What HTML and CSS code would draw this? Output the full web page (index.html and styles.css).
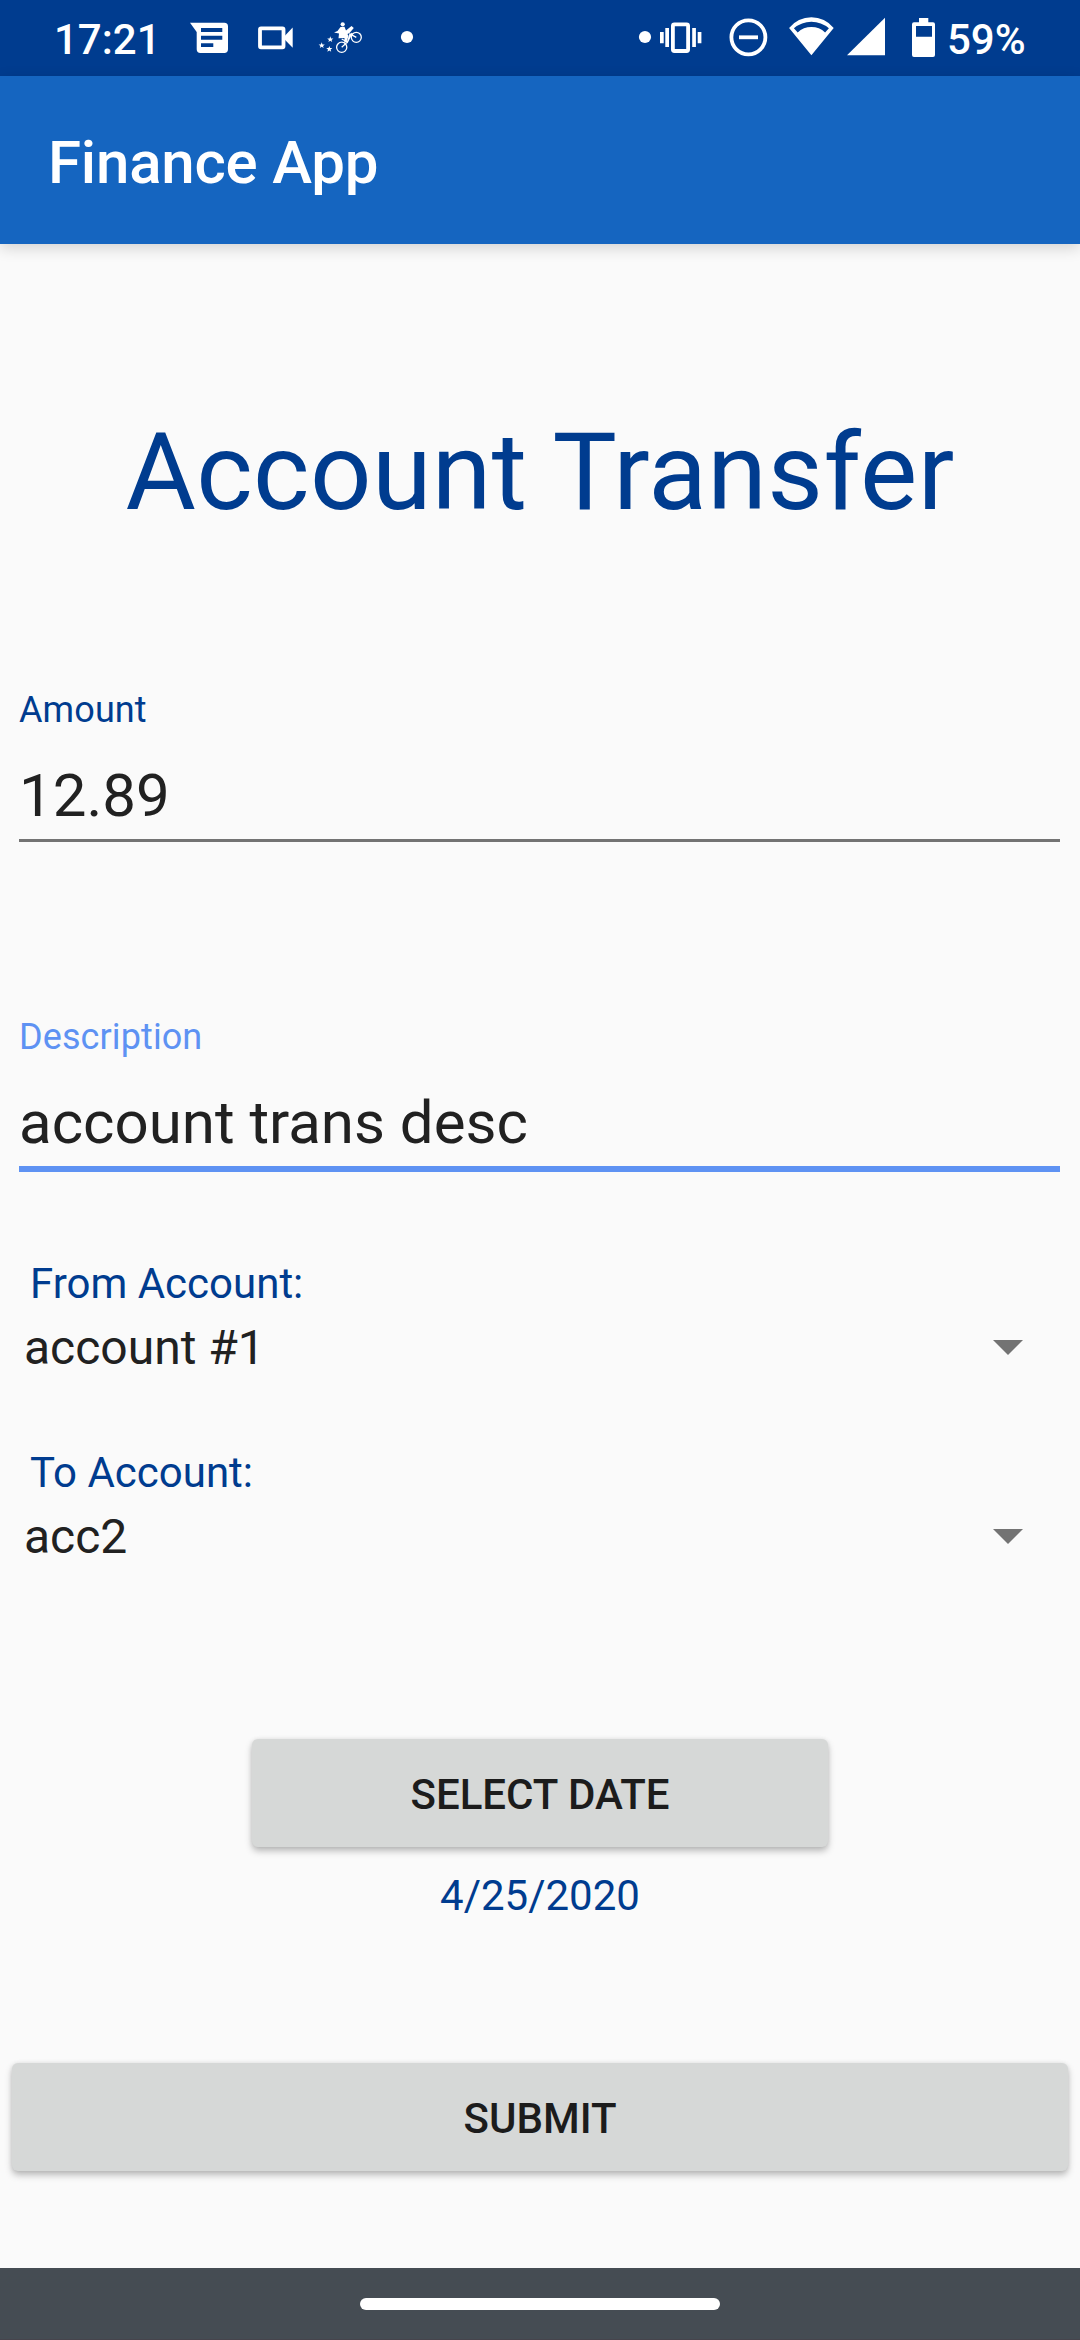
FILE: index.html
```html
<!DOCTYPE html>
<html lang="en">
<head>
  <meta charset="utf-8">
  <title>Finance App</title>
  <link rel="stylesheet" href="styles.css">
</head>
<body>
  <div class="screen">
    <header class="status-bar">
      <span class="clock">17:21</span>
      <svg class="icon" width="52" height="76" viewBox="188 0 52 76">
        <path fill="#fff" fill-rule="evenodd" d="M190 22.7H224.300Q228 22.700 228 26.400V49.300Q228 53 224.300 53H200.400Q196.700 53 196.700 49.300V32ZM201 28V32H222.300V28ZM201 35.700V39.700H222.300V35.700ZM201 43.200V47H213.300V43.200Z"/>
      </svg>
      <svg class="icon" width="70" height="76" viewBox="240 0 70 76">
        <rect x="260" y="28.300" width="23.500" height="19" rx="1" fill="none" stroke="#fff" stroke-width="3.800"/>
        <path fill="#fff" d="M283 37.700L292.700 27.500V47.700Z"/>
      </svg>
      <svg class="icon" width="70" height="76" viewBox="310 0 70 76">
        <g fill="none" stroke="#fff" stroke-width="1.300">
          <circle cx="341.700" cy="47.300" r="5.100"/>
          <circle cx="356.300" cy="37.300" r="5"/>
          <path d="M341.700 47.300L347.500 42L350 34L356.300 37.300M347.500 42L341.700 39M347 43L352 33"/>
        </g>
        <g fill="#fff">
          <circle cx="342.700" cy="24.300" r="2.100"/>
          <path d="M340.500 27L344.500 26.800L346 30.500L351.500 26L353.800 28L349.500 33L347.500 34L348.500 36L346.500 42L344.200 43L344.500 38L338.500 38.200L339 33.500L334 32.500L337.500 31Z"/>
          <path id="star" d="M330.300 36.300L331.100 38.400L333.400 38.500L331.600 39.900L332.200 42.100L330.300 40.800L328.400 42.100L329 39.900L327.200 38.500L329.500 38.400Z"/>
          <use href="#star" x="-8.600" y="6"/>
          <use href="#star" x="-1" y="9.600"/>
        </g>
      </svg>
      <svg class="icon" width="54" height="76" viewBox="380 0 54 76"><circle cx="407" cy="37" r="6.100" fill="#fff"/></svg>
      <div class="status-right">
        <svg class="icon" width="24" height="76" viewBox="633 0 24 76"><circle cx="645" cy="37" r="6.100" fill="#fff"/></svg>
        <svg class="icon" width="60" height="76" viewBox="657 0 60 76" fill="#fff">
          <path d="M660 32H663.700V43.300H660ZM665.300 28H669V47H665.300ZM692.200 28H695.900V47H692.200ZM697.700 32H701.400V43.300H697.700Z"/>
          <rect x="672.900" y="24.300" width="15.200" height="26.700" rx="1.500" fill="none" stroke="#fff" stroke-width="3.800"/>
        </svg>
        <svg class="icon" width="63" height="76" viewBox="717 0 63 76" fill="none" stroke="#fff" stroke-width="3.800">
          <circle cx="748.400" cy="37.300" r="17"/>
          <path d="M739 37.300H758"/>
        </svg>
        <svg class="icon" width="60" height="76" viewBox="780 0 60 76">
          <path fill="#fff" fill-rule="evenodd" d="M789.100 28A28.500 28.500 0 0 1 833.700 28L811.400 55.200ZM793.900 28.300L797.700 32.500A19.500 19.500 0 0 1 825.100 32.500L828.900 28.300A27 27 0 0 0 793.900 28.300Z"/>
        </svg>
        <svg class="icon" width="60" height="76" viewBox="840 0 60 76"><path fill="#fff" d="M847 55.300H885V17.800Z"/></svg>
        <svg class="icon" width="47" height="76" viewBox="900 0 47 76">
          <path fill="#fff" fill-rule="evenodd" d="M919 18H928.300V22.300H933Q935 22.300 935 24.300V55Q935 57 933 57H914Q912 57 912 55V24.300Q912 22.300 914 22.300H919ZM916 26V36.700H932V26Z"/>
        </svg>
        <span class="battery-level">59%</span>
      </div>
    </header>

    <div class="app-bar">Finance App</div>

    <main class="form">
      <h1 class="title">Account Transfer</h1>

      <div class="field">
        <div class="field-label">Amount</div>
        <div class="field-value">12.89</div>
      </div>

      <div class="field field-focused">
        <div class="field-label">Description</div>
        <div class="field-value">account trans desc</div>
      </div>

      <div class="picker">
        <div class="picker-label">From Account:</div>
        <div class="picker-row">
          <span>account #1</span>
          <svg class="arrow" width="30" height="15" viewBox="0 0 30 15"><path fill="#737373" d="M0 0H30L15 15Z"/></svg>
        </div>
      </div>

      <div class="picker">
        <div class="picker-label">To Account:</div>
        <div class="picker-row">
          <span>acc2</span>
          <svg class="arrow" width="30" height="15" viewBox="0 0 30 15"><path fill="#737373" d="M0 0H30L15 15Z"/></svg>
        </div>
      </div>

      <button class="button button-date">SELECT DATE</button>
      <div class="date">4/25/2020</div>
      <button class="button button-submit">SUBMIT</button>
    </main>

    <footer class="nav-bar"><div class="nav-handle"></div></footer>
  </div>
</body>
</html>
```

FILE: styles.css
```css
* {
  box-sizing: border-box;
}

body {
  margin: 0;
  background: #fafafa;
  color: #212121;
  font-family: Roboto, sans-serif;
}

.screen {
  display: flex;
  flex-direction: column;
  width: 1080px;
  height: 2340px;
  overflow: hidden;
}

.status-bar {
  display: flex;
  flex: none;
  height: 76px;
  background: #003c8f;
  color: #fff;
  font-size: 42px;
  font-weight: 500;
  line-height: 79px;
}

.icon {
  flex: none;
  display: block;
}

.clock {
  width: 188px;
  padding-left: 54px;
}

.status-right {
  display: flex;
  margin-left: auto;
}

.battery-level {
  width: 133px;
}

.app-bar {
  flex: none;
  height: 168px;
  padding-left: 48px;
  background: #1565c0;
  box-shadow: 0 4px 14px rgba(0, 0, 0, 0.16);
  color: #fff;
  font-size: 60px;
  font-weight: 500;
  letter-spacing: -0.2px;
  line-height: 174px;
}

.form {
  display: flex;
  flex: 1;
  flex-direction: column;
  padding-top: 165px;
}

.title {
  margin: 0 0 154px;
  color: #003c8f;
  font-size: 108px;
  font-weight: 400;
  letter-spacing: 0.35px;
  line-height: 126px;
  text-align: center;
}

.field {
  height: 153px;
  margin: 0 20px 174px 19px;
  border-bottom: 3px solid #737373;
}

.field-label {
  margin-bottom: 30px;
  color: #003c8f;
  font-size: 36px;
  letter-spacing: 0.1px;
  line-height: 42px;
}

.field-value {
  font-size: 60px;
  line-height: 70px;
}

.field-focused {
  height: 156px;
  margin-bottom: 87px;
  border-bottom: 6px solid #5e92f3;
}

.field-focused .field-label {
  color: #5e92f3;
}

.picker {
  height: 117px;
  margin-bottom: 72px;
}

.picker-label {
  margin-bottom: 11px;
  padding-left: 30px;
  color: #003c8f;
  font-size: 42px;
  line-height: 50px;
}

.picker-row {
  display: flex;
  align-items: center;
  justify-content: space-between;
  padding: 0 57px 0 24px;
  font-size: 48px;
  line-height: 56px;
}

.arrow {
  margin-bottom: 1px;
}

.button {
  height: 108px;
  padding: 3px 0 0;
  border: 0;
  border-radius: 6px;
  background: #d6d8d7;
  box-shadow: 0 4px 7px rgba(0, 0, 0, 0.26), 0 0 4px rgba(0, 0, 0, 0.08);
  color: #1c1c1c;
  font: 500 42px/105px Roboto, sans-serif;
}

.button-date {
  align-self: center;
  width: 576px;
  margin: 102px 0 24px;
}

.date {
  margin-bottom: 142px;
  color: #003c8f;
  font-size: 42px;
  line-height: 50px;
  text-align: center;
}

.button-submit {
  margin: 0 12px;
}

.nav-bar {
  display: flex;
  flex: none;
  justify-content: center;
  height: 72px;
  padding-top: 30px;
  border-bottom: 1px solid #46444c;
  background: #454c53;
}

.nav-handle {
  width: 360px;
  height: 12px;
  border-radius: 6px;
  background: #fff;
}
```
